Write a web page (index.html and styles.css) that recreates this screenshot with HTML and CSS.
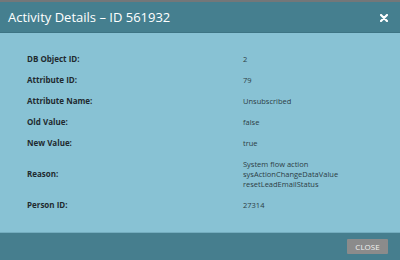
FILE: index.html
```html
<!DOCTYPE html>
<html lang="en">
<head>
    <meta charset="UTF-8">
    <title>Activity Details</title>
    <link rel="stylesheet" href="styles.css">
</head>
<body>
    <div class="dialog">
        <div class="dialog-header">
            <span class="dialog-title">Activity Details – ID 561932</span>
            <span class="close-x">
                <svg width="8" height="8" viewBox="0 0 8 8">
                    <path d="M1 1 L7 7 M7 1 L1 7" stroke="#fff" stroke-width="2.2" stroke-linecap="round"/>
                </svg>
            </span>
        </div>

        <div class="dialog-body">
            <table class="details">
                <tr><th>DB Object ID:</th><td>2</td></tr>
                <tr><th>Attribute ID:</th><td>79</td></tr>
                <tr><th>Attribute Name:</th><td>Unsubscribed</td></tr>
                <tr><th>Old Value:</th><td>false</td></tr>
                <tr><th>New Value:</th><td>true</td></tr>
                <tr><th>Reason:</th><td>System flow action<br>sysActionChangeDataValue<br>resetLeadEmailStatus</td></tr>
                <tr><th>Person ID:</th><td>27314</td></tr>
            </table>
        </div>

        <div class="dialog-footer">
            <button class="close-button">CLOSE</button>
        </div>
    </div>
</body>
</html>
```

FILE: styles.css
```css
body {
    margin: 0;
    padding: 0;
    font-family: "Open Sans", "Liberation Sans", sans-serif;
}
.dialog {
    width: 400px;
    height: 260px;
    display: flex;
    flex-direction: column;
    border-top: 2px solid #737779;
    box-sizing: border-box;
    background-color: #88c2d4;
}
.dialog-header {
    height: 30px;
    display: flex;
    align-items: center;
    justify-content: space-between;
    padding: 0 12px 0 8px;
    background-color: #457f8f;
    border-bottom: 1px solid #3d7484;
}
.dialog-title {
    color: #fff;
    font-size: 13px;
}
.close-x {
    display: flex;
    margin-top: 1px;
}
.dialog-body {
    flex: 1;
    padding: 15px 0 0 27px;
    border-bottom: 1px solid #74adbf;
}
.details {
    border-collapse: collapse;
    font-size: 8px;
    line-height: 10px;
}
.details th,
.details td {
    padding: 5.5px 0;
    text-align: left;
    vertical-align: middle;
}
.details th {
    width: 216px;
    font-weight: bold;
    color: #1f2a2f;
}
.details td {
    font-size: 7.5px;
    color: #2d3d44;
}
.dialog-footer {
    height: 27px;
    display: flex;
    align-items: center;
    justify-content: flex-end;
    padding-right: 12px;
    background-color: #467e8e;
}
.close-button {
    height: 15px;
    width: 41px;
    padding: 0;
    border: none;
    border-radius: 1px;
    background-color: #8b8b8b;
    color: #f0f0f0;
    font-family: "Open Sans", "Liberation Sans", sans-serif;
    font-size: 8px;
}
```
